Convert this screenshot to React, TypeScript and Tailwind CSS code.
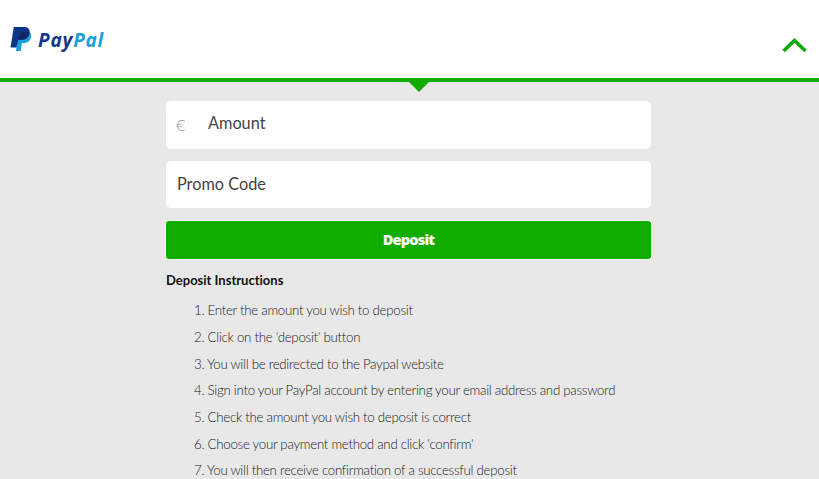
import React from "react";

const steps = [
  "Enter the amount you wish to deposit",
  "Click on the 'deposit' button",
  "You will be redirected to the Paypal website",
  "Sign into your PayPal account by entering your email address and password",
  "Check the amount you wish to deposit is correct",
  "Choose your payment method and click 'confirm'",
  "You will then receive confirmation of a successful deposit",
];

function PayPalLogo() {
  return (
    <div className="flex items-center">
      <svg width="22" height="26" viewBox="0 0 22 26" className="shrink-0">
        <path d="M8 7l11.300-1.500c1.900 1.700 2.100 3.800 1.500 6.200-1 3.700-3.700 5.300-7.200 5.300h-1.700L10.700 25H6z" fill="#169fdc" />
        <path d="M3.800 1h10.200c4.400 0 6.300 2.600 5.400 6.500-1 4.500-3.900 6.300-8.300 6.300H8.300L6.400 21.500H.500z" fill="#0f3588" />
        <path d="M9.600 7.300c.2-.8.600-1.200 1.400-1.200h6.500c.8.100 1.400.3 1.900.6-.9 4.700-3.900 7.100-8.300 7.100H8.100z" fill="#12266a" />
      </svg>
      <span className="mt-[3px] ml-[6px] font-['Open_Sans',sans-serif] text-[19px] leading-[26px] font-bold tracking-[0.800px] italic text-[#16368c]">
        Pay<span className="text-[#1c9fdc]">Pal</span>
      </span>
    </div>
  );
}

function App() {
  return (
    <div className="flex h-[479px] w-full flex-col overflow-hidden bg-[#e8e8e8] font-['Lato',sans-serif]">
      <header className="relative flex h-[82px] shrink-0 items-start justify-between border-b-4 border-[#10ac00] bg-white pt-6 pr-3 pl-[10px]">
        <PayPalLogo />
        <svg width="25" height="16" viewBox="0 0 25 16" className="mt-[13px]">
          <path d="M1.500 14 12.500 3.500 23.500 14" fill="none" stroke="#10a80a" strokeWidth="3.600" />
        </svg>
        <svg width="22" height="11" viewBox="0 0 22 11" className="absolute top-[81px] left-[408px]">
          <path d="M0 0h22L11 11z" fill="#10ac00" />
        </svg>
      </header>
      <main className="ml-[166px] w-[485px] pt-[19px]">
        <div className="flex h-12 items-center rounded-[5px] bg-white pb-[3px] text-[16.300px] text-[#444]">
          <span className="w-[42px] pt-[3px] pl-[10px] font-light text-[#999]">€</span>
          <span>Amount</span>
        </div>
        <div className="mt-3 flex h-[47px] items-center rounded-[5px] bg-white pb-px pl-[11px] text-[16.300px] text-[#444]">
          Promo Code
        </div>
        <button className="mt-[13px] block h-[38px] w-full rounded-[3px] bg-[#10ac00] pb-px font-['Open_Sans',sans-serif] text-[14.500px] font-extrabold tracking-[-0.800px] text-white ring-1 ring-[#f4f4f4]">
          Deposit
        </button>
        <h2 className="mt-[11px] text-[13px] leading-5 font-bold text-[#111] [font-variant-ligatures:none]">Deposit Instructions</h2>
        <ol className="mt-[7.200px] ml-7">
          {steps.map((step, i) => (
            <li key={step} className="h-[26.700px] text-[13.300px] leading-[26.700px] font-light tracking-[-0.290px] whitespace-nowrap text-[#222]">
              {i + 1}. {step}
            </li>
          ))}
        </ol>
      </main>
    </div>
  );
}

export default App;
